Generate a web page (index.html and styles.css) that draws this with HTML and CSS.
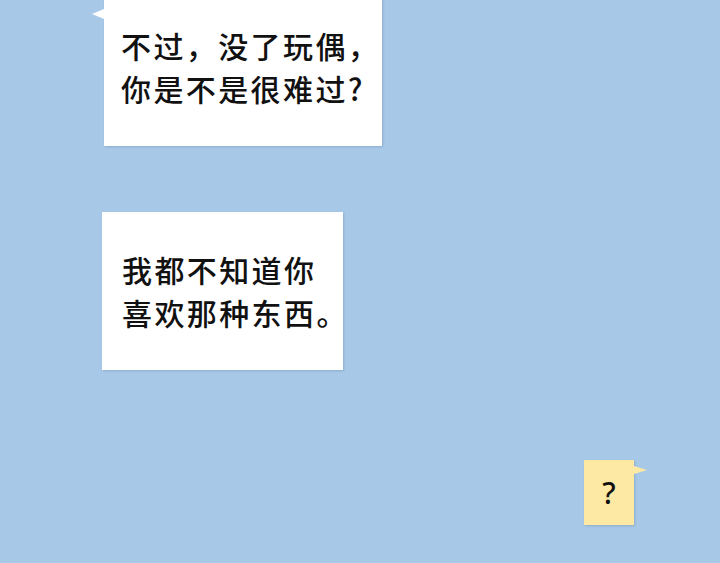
FILE: index.html
```html
<!DOCTYPE html>
<html lang="zh">
<head>
<meta charset="utf-8">
<link rel="stylesheet" href="styles.css">
</head>
<body>
<main class="chat">
  <div class="bubble bubble--white bubble--first bubble--tail-left">
    <p class="msg">不过，没了玩偶，<br>你是不是很难过?</p>
  </div>
  <div class="bubble bubble--white bubble--second">
    <p class="msg">我都不知道你<br>喜欢那种东西。</p>
  </div>
  <div class="bubble bubble--yellow">
    <p class="msg msg--q">?</p>
  </div>
</main>
</body>
</html>
```

FILE: styles.css
```css
html, body {
  margin: 0;
  padding: 0;
}
body {
  background: #a8c8e7;
  width: 720px;
  height: 563px;
  overflow: hidden;
  font-family: "Noto Sans CJK SC", "Noto Sans", sans-serif;
  color: #111;
}
.chat {
  display: flex;
  flex-direction: column;
  align-items: flex-start;
}
.bubble {
  position: relative;
  box-sizing: border-box;
  display: flex;
  align-items: center;
  box-shadow: 1px 1px 2px rgba(60, 90, 120, 0.25);
}
.bubble--white {
  background: #ffffff;
  height: 158px;
  padding-left: 17px;
}
.bubble--first {
  margin-top: -12px;
  margin-left: 104px;
  width: 278px;
}
.bubble--second {
  margin-top: 66px;
  margin-left: 102px;
  width: 241px;
  padding-left: 20px;
}
.bubble--tail-left::before {
  content: "";
  position: absolute;
  left: -12px;
  top: 21px;
  border-style: solid;
  border-width: 5px 12px 5px 0;
  border-color: transparent #ffffff transparent transparent;
}
.bubble--yellow {
  background: #fde9a3;
  margin-top: 90px;
  margin-left: 584px;
  width: 50px;
  height: 65px;
  justify-content: center;
}
.bubble--yellow::after {
  content: "";
  position: absolute;
  right: -13px;
  top: 6px;
  border-style: solid;
  border-width: 4px 0 4px 13px;
  border-color: transparent transparent transparent #fde9a3;
}
.msg {
  margin: 0;
  font-size: 30px;
  font-weight: 500;
  line-height: 43px;
  letter-spacing: 2.4px;
  white-space: nowrap;
}
.msg--q {
  font-size: 30px;
  line-height: 30px;
  letter-spacing: 0;
  font-weight: 500;
  font-family: "Noto Sans", sans-serif;
}
```
